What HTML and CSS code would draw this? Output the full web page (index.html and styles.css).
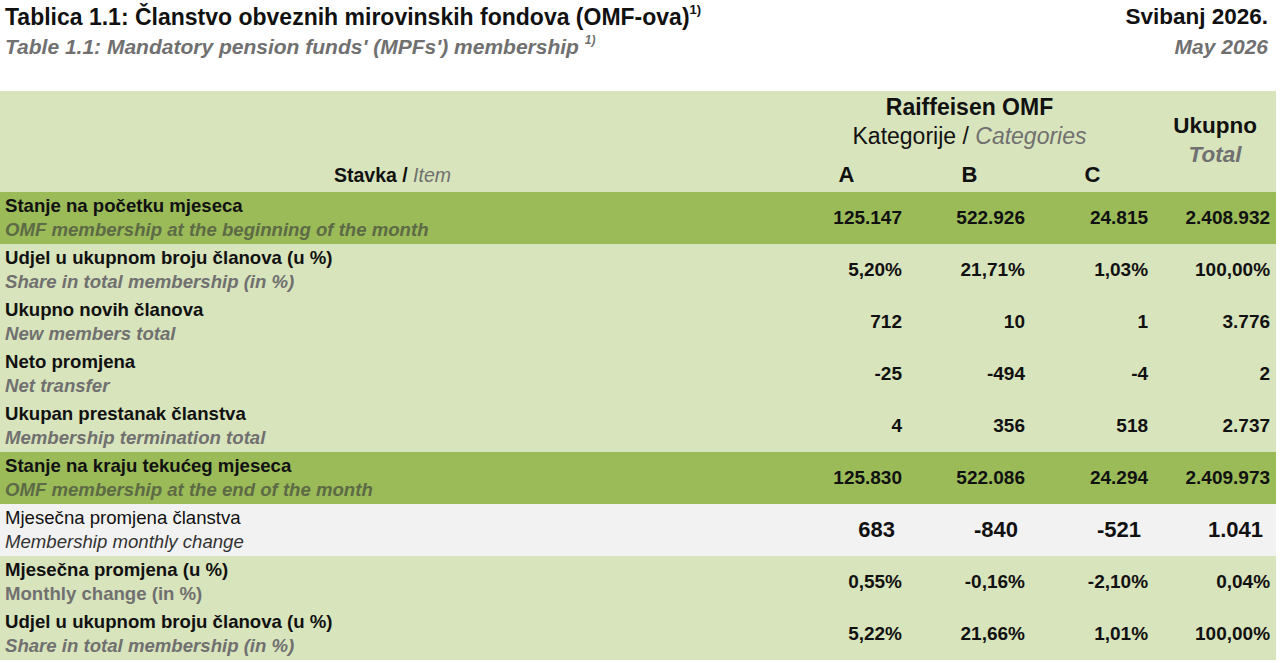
FILE: index.html
```html
<!DOCTYPE html>
<html lang="hr">
<head>
<meta charset="utf-8">
<title>Tablica 1.1</title>
<link rel="stylesheet" href="styles.css">
</head>
<body>
<header class="top">
  <div class="titles">
    <div class="t-hr">Tablica 1.1: Članstvo obveznih mirovinskih fondova (OMF-ova)<sup>1)</sup></div>
    <div class="t-en">Table 1.1: Mandatory pension funds' (MPFs') membership <sup>1)</sup></div>
  </div>
  <div class="dates">
    <div class="d-hr">Svibanj 2026.</div>
    <div class="d-en">May 2026</div>
  </div>
</header>
<table class="tbl">
  <colgroup>
    <col class="c-item"><col class="c-num"><col class="c-num"><col class="c-num"><col class="c-tot">
  </colgroup>
  <thead>
    <tr class="h1">
      <th rowspan="3" class="h-item"><b>Stavka /</b> <i>Item</i></th>
      <th colspan="3" class="h-fund">Raiffeisen OMF</th>
      <th rowspan="3" class="h-tot"><b>Ukupno</b><br><i>Total</i></th>
    </tr>
    <tr class="h2">
      <th colspan="3" class="h-cat">Kategorije / <i>Categories</i></th>
    </tr>
    <tr class="h3">
      <th class="h-abc">A</th><th class="h-abc">B</th><th class="h-abc">C</th>
    </tr>
  </thead>
  <tbody>
    <tr class="dark">
      <td class="lbl"><b>Stanje na početku mjeseca</b><i>OMF membership at the beginning of the month</i></td>
      <td>125.147</td><td>522.926</td><td>24.815</td><td>2.408.932</td>
    </tr>
    <tr>
      <td class="lbl"><b>Udjel u ukupnom broju članova (u %)</b><i>Share in total membership (in %)</i></td>
      <td>5,20%</td><td>21,71%</td><td>1,03%</td><td>100,00%</td>
    </tr>
    <tr>
      <td class="lbl"><b>Ukupno novih članova</b><i>New members total</i></td>
      <td>712</td><td>10</td><td>1</td><td>3.776</td>
    </tr>
    <tr>
      <td class="lbl"><b>Neto promjena</b><i>Net transfer</i></td>
      <td>-25</td><td>-494</td><td>-4</td><td>2</td>
    </tr>
    <tr>
      <td class="lbl"><b>Ukupan prestanak članstva</b><i>Membership termination total</i></td>
      <td>4</td><td>356</td><td>518</td><td>2.737</td>
    </tr>
    <tr class="dark">
      <td class="lbl"><b>Stanje na kraju tekućeg mjeseca</b><i>OMF membership at the end of the month</i></td>
      <td>125.830</td><td>522.086</td><td>24.294</td><td>2.409.973</td>
    </tr>
    <tr class="plain">
      <td class="lbl"><b>Mjesečna promjena članstva</b><i>Membership monthly change</i></td>
      <td>683</td><td>-840</td><td>-521</td><td>1.041</td>
    </tr>
    <tr class="upright">
      <td class="lbl"><b>Mjesečna promjena (u %)</b><i>Monthly change (in %)</i></td>
      <td>0,55%</td><td>-0,16%</td><td>-2,10%</td><td>0,04%</td>
    </tr>
    <tr>
      <td class="lbl"><b>Udjel u ukupnom broju članova (u %)</b><i>Share in total membership (in %)</i></td>
      <td>5,22%</td><td>21,66%</td><td>1,01%</td><td>100,00%</td>
    </tr>
  </tbody>
</table>
</body>
</html>
```

FILE: styles.css
```css
html, body {
  margin: 0;
  padding: 0;
  background: #ffffff;
  font-family: "Liberation Sans", Arial, sans-serif;
  color: #111111;
}

.top {
  display: flex;
  justify-content: space-between;
  align-items: flex-start;
  height: 91px;
  padding: 2px 12px 0 5px;
  box-sizing: border-box;
}

.t-hr {
  font-size: 23px;
  font-weight: bold;
  line-height: 30px;
}

.t-hr sup, .t-en sup {
  font-size: 13px;
  line-height: 0;
  vertical-align: 11px;
}

.t-en {
  font-size: 21px;
  font-weight: bold;
  font-style: italic;
  color: #707070;
  line-height: 30px;
}

.t-en sup {
  font-size: 12px;
  vertical-align: 10px;
}

.dates {
  text-align: right;
}

.d-hr {
  font-size: 22.5px;
  font-weight: bold;
  line-height: 30px;
}

.d-en {
  font-size: 21px;
  font-weight: bold;
  font-style: italic;
  color: #707070;
  line-height: 30px;
}

.tbl {
  border-collapse: collapse;
  table-layout: fixed;
  width: 1276px;
  background: #d8e4bc;
}

.c-item { width: 785px; }
.c-num { width: 123px; }
.c-tot { width: 122px; }

.tbl th {
  padding: 0;
  font-weight: normal;
}

.h1 { height: 32px; }
.h2 { height: 27px; }
.h3 { height: 42px; }

.h-item {
  vertical-align: bottom;
  text-align: center;
  font-size: 19.5px;
  line-height: 24px;
  padding-bottom: 5px !important;
}
.h-item b { font-weight: bold; }
.h-item i { font-weight: normal; color: #707070; }

.h-fund {
  font-size: 23px;
  font-weight: bold !important;
  line-height: 32px;
  vertical-align: middle;
}

.h-cat {
  font-size: 23px;
  line-height: 27px;
  vertical-align: middle;
}
.h-cat i, .h-tot i { color: #707070; }

.h-abc {
  font-size: 22px;
  font-weight: bold !important;
  line-height: 24px;
  vertical-align: bottom;
  padding-bottom: 5px !important;
}

.h-tot {
  font-size: 22.5px;
  font-weight: bold !important;
  line-height: 29.5px;
  vertical-align: middle;
  padding-bottom: 3px !important;
}

.tbl td {
  height: 52px;
  padding: 0 6px 0 0;
  box-sizing: border-box;
  text-align: right;
  font-size: 19px;
  font-weight: bold;
  vertical-align: middle;
}

.tbl td.lbl {
  text-align: left;
  padding: 0 0 0 5px;
  font-size: 18.6px;
  line-height: 24px;
}

.lbl b, .lbl i {
  display: block;
}

.lbl i {
  color: #707070;
  font-weight: bold;
}

.dark {
  background: #9bbb59;
}
.dark .lbl i {
  color: #5d6a45;
}

.plain {
  background: #f2f2f2;
}
.plain .lbl b {
  font-weight: normal;
}
.plain .lbl i {
  font-weight: normal;
  color: #333333;
}
.plain td {
  font-size: 22px;
  padding-right: 13px;
}

.upright .lbl i {
  font-style: normal;
}
```
